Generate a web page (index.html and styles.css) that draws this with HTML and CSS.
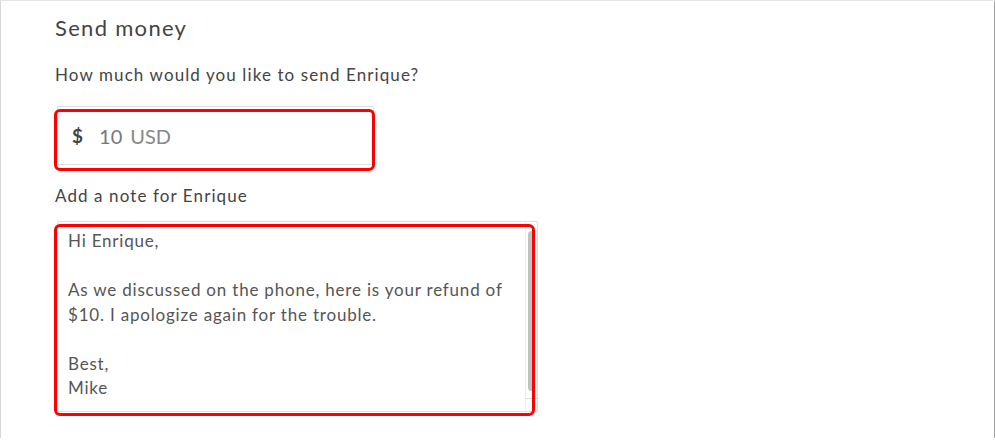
FILE: index.html
```html
<!DOCTYPE html>
<html lang="en">

<head>
  <title>Send money</title>
  <link rel="stylesheet" href="styles.css">
</head>

<body>

  <main class="window">
    <section class="send">
      <h2>Send money</h2>

      <label class="field-label" for="amount">How much would you like to send Enrique?</label>
      <div class="mark mark-amount">
        <div class="amount" id="amount">
          <span class="currency">$</span>
          <span class="value">10</span>
          <span class="unit">USD</span>
        </div>
      </div>

      <label class="field-label">Add a note for Enrique</label>
      <div class="mark mark-note">
        <div class="note">
          <div class="note-text">
            <p>Hi Enrique,</p>
            <p>As we discussed on the phone, here is your refund of<br>$10. I apologize again for the trouble.</p>
            <p>Best,<br>Mike</p>
          </div>
          <div class="scrollbar">
            <div class="thumb"></div>
            <div class="grip"></div>
          </div>
        </div>
      </div>
    </section>
  </main>

</body>

</html>
```

FILE: styles.css
```css
* {
  box-sizing: border-box;
}

body {
  margin: 0;
  background-color: #fff;
  font-family: Lato, "Open Sans", sans-serif;
  color: #444;
}

.window {
  inline-size: 994px;
  block-size: 438px;
  border-top: 1px solid #e6e6e6;
  border-left: 1px solid #d8d8d8;
  box-shadow: 1px 1px 2px rgba(0, 0, 0, 0.55);
  background-color: #fff;
}

.send {
  display: flex;
  flex-flow: column;
  align-items: start;
  padding: 13px 0 0 54px;

  * {
    margin-block: 0;
  }
}

h2 {
  font-size: 22px;
  font-weight: 400;
  line-height: 28px;
  letter-spacing: 1.3px;
  color: #444;
}

.field-label {
  font-size: 17px;
  line-height: 22px;
  letter-spacing: 1.1px;
  color: #444;
  margin-top: 22px;
}

.field-label + .mark {
  margin-top: 20px;
}

.mark {
  position: relative;
  margin-left: 2px;

  &::after {
    content: '';
    position: absolute;
    border: 3px solid #fe0000;
    border-radius: 6px;
    pointer-events: none;
  }
}

.mark-amount::after {
  inset: 3px -1px -6px -3px;
}

.mark-note::after {
  inset: 3px 3px -4px -3px;
}

.amount {
  display: flex;
  align-items: center;
  inline-size: 317px;
  block-size: 59px;
  border: 1px solid #ddd;
  border-radius: 2px;
  padding-left: 14px;
  font-size: 20px;

  .currency {
    color: #444;
    font-weight: 700;
    font-size: 19px;
    margin-right: 16px;
  }

  .value {
    color: #777;
    margin-right: 8px;
  }

  .unit {
    color: #888;
  }
}

.mark-amount + .field-label {
  margin-top: 20px;
}

.mark-note {
  margin-top: 14px !important;
}

.note {
  display: flex;
  inline-size: 481px;
  block-size: 191px;
  border: 1px solid #ddd;
  border-radius: 2px;
}

.note-text {
  flex: 1;
  padding: 7px 10px 0;
  font-size: 17px;
  line-height: 24.5px;
  letter-spacing: 0.8px;
  color: #555;

  p + p {
    margin-top: 24.5px;
  }
}

.scrollbar {
  display: flex;
  flex-flow: column;
  inline-size: 12px;
  border-left: 1px solid #eee;
  padding-top: 9px;

  .thumb {
    margin-inline: 2px;
    block-size: 160px;
    border-radius: 4px;
    background-color: #c1c1c1;
  }

  .grip {
    margin-top: auto;
    block-size: 13px;
    border-top: 1px solid #ddd;
  }
}
```
